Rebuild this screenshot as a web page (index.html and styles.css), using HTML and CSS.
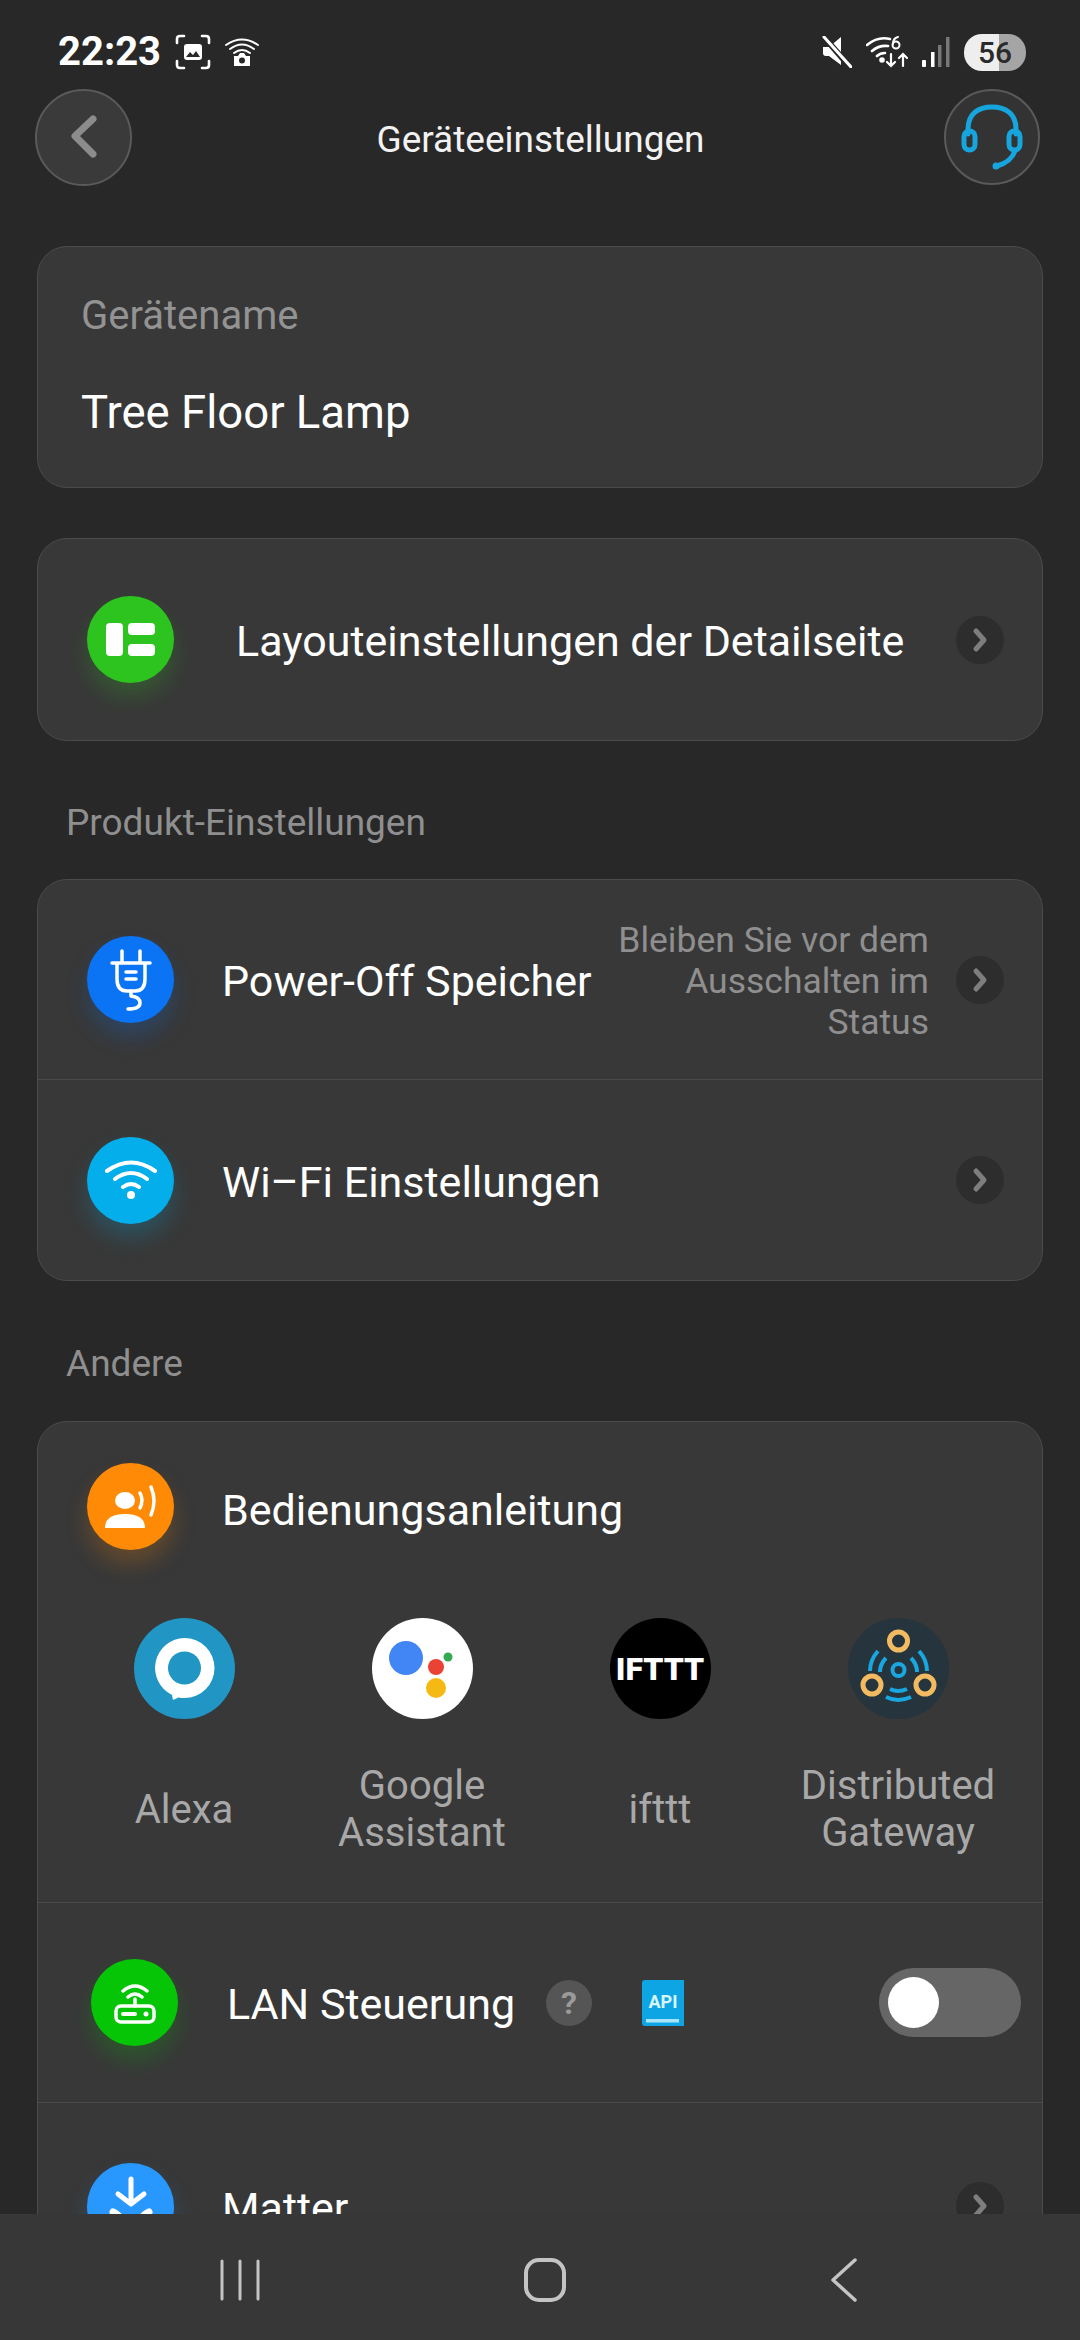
FILE: index.html
```html
<!DOCTYPE html>
<html lang="de">
<head>
    <meta charset="UTF-8">
    <meta name="viewport" content="width=device-width, initial-scale=1.0">
    <title>Geräteeinstellungen</title>
    <link rel="stylesheet" href="styles.css">
</head>
<body>
<div class="screen">
    <div class="content">
        <div class="statusbar">
            <div class="status-left">
                <span class="time">22:23</span>
                <svg width="36" height="36" viewBox="0 0 36 36" fill="none" stroke="#fff" stroke-width="2.6" stroke-linecap="round">
                    <path d="M2 9V5q0-3 3-3h4M27 2h4q3 0 3 3v4M34 27v4q0 3-3 3h-4M9 34H5q-3 0-3-3v-4"/>
                    <rect x="9" y="10" width="18" height="16" rx="3" fill="#fff" stroke="none"/>
                    <path d="M11 23l4-5 3 3 3-4 4 6z" fill="#282828" stroke="none"/>
                </svg>
                <svg width="34" height="30" viewBox="0 0 34 30" fill="none" stroke="#fff" stroke-width="2" stroke-linecap="round">
                    <path d="M1 8Q17-3 33 8M5 12Q17 3 29 12M9 16Q17 10 25 16"/>
                    <path d="M9 29V19h4l2-3h4l2 3h4v10z" fill="#fff" stroke="none"/>
                    <circle cx="17" cy="23.500" r="3" fill="#282828" stroke="none"/>
                </svg>
            </div>
            <div class="status-right">
                <svg width="30" height="32" viewBox="0 0 30 32">
                    <path d="M1 11h6L19 1v28L7 20H4q-3 0-3-3z" fill="#fff"/>
                    <path d="M2 1l26 30" stroke="#282828" stroke-width="6"/>
                    <path d="M2 1l27 30" stroke="#fff" stroke-width="3" stroke-linecap="round"/>
                </svg>
                <svg width="42" height="32" viewBox="0 0 42 32" fill="none" stroke="#fff" stroke-width="2.600" stroke-linecap="round">
                    <path d="M1 9Q12 0 24 3M6 15Q13 9 22 10M11 20Q14 17 19 17"/>
                    <circle cx="16" cy="24" r="1.500" fill="#fff"/>
                    <circle cx="30" cy="9" r="3.500" stroke-width="2"/>
                    <path d="M27 8Q27 2 32 1" stroke-width="2"/>
                    <path d="M25 18v12M21 26l4 4 4-4M37 30V18M33 22l4-4 4 4" stroke-width="2.200"/>
                </svg>
                <svg width="28" height="30" viewBox="0 0 28 30">
                    <rect x="0" y="23" width="4" height="7" rx="1" fill="#fff"/>
                    <rect x="9" y="15" width="3.500" height="15" fill="#fff"/>
                    <rect x="16" y="8" width="3.500" height="22" fill="#777"/>
                    <rect x="24" y="0" width="3.500" height="30" fill="#777"/>
                </svg>
                <div class="battery">56</div>
            </div>
        </div>

        <header class="topbar">
            <div class="round-btn back-btn">
                <svg width="30" height="44" viewBox="0 0 30 44" fill="none" stroke="#8c8c8c" stroke-width="7" stroke-linecap="round" stroke-linejoin="round">
                    <path d="M24 4L6 21l18 18"/>
                </svg>
            </div>
            <h1 class="title">Geräteeinstellungen</h1>
            <div class="round-btn help-btn">
                <svg width="62" height="66" viewBox="0 0 62 66" fill="none" stroke="#16a5dc" stroke-width="5" stroke-linecap="round">
                    <path d="M7 30V25C7 10 17 3 31 3s24 7 24 22v5"/>
                    <rect x="3" y="27" width="11" height="19" rx="5.500"/>
                    <rect x="48" y="27" width="11" height="19" rx="5.500"/>
                    <path d="M54 47Q50 58 36 62"/>
                    <circle cx="35" cy="62" r="3.500" fill="#16a5dc" stroke="none"/>
                </svg>
            </div>
        </header>

        <section class="card name-card">
            <div class="name-label">Gerätename</div>
            <div class="name-value">Tree Floor Lamp</div>
        </section>

        <section class="card layout-card">
            <div class="row row-layout">
                <div class="icon icon-green">
                    <svg width="49" height="33" viewBox="0 0 49 33" fill="#fff">
                        <rect x="0" y="0" width="17" height="33" rx="4"/>
                        <rect x="22" y="0" width="27" height="12" rx="4"/>
                        <rect x="22" y="21" width="27" height="12" rx="4"/>
                    </svg>
                </div>
                <div class="row-text layout-text">Layouteinstellungen der Detailseite</div>
                <div class="chevron"><svg width="16" height="26" viewBox="0 0 16 26"><path d="M4 4l8 9-8 9" fill="none" stroke="#7e7e7e" stroke-width="5" stroke-linecap="round" stroke-linejoin="round"/></svg></div>
            </div>
        </section>

        <h2 class="section-title">Produkt-Einstellungen</h2>
        <section class="card">
            <div class="row">
                <div class="icon icon-blue">
                    <svg width="42" height="62" viewBox="0 0 42 62" fill="none" stroke="#fff" stroke-width="3.500" stroke-linecap="round" stroke-linejoin="round">
                        <path d="M12 2v12M30 2v12M2 14h38M7 14v16q0 12 10 12h8q10 0 10-12V14"/>
                        <path d="M16 23h10M16 30h10"/>
                        <path d="M21 42v5q9 1 9 7t-12 6"/>
                    </svg>
                </div>
                <div class="row-text">Power-Off Speicher</div>
                <div class="row-desc">Bleiben Sie vor dem Ausschalten im Status</div>
                <div class="chevron"><svg width="16" height="26" viewBox="0 0 16 26"><path d="M4 4l8 9-8 9" fill="none" stroke="#7e7e7e" stroke-width="5" stroke-linecap="round" stroke-linejoin="round"/></svg></div>
            </div>
            <div class="row">
                <div class="icon icon-cyan">
                    <svg width="52" height="40" viewBox="0 0 52 40" fill="none" stroke="#fff" stroke-width="4" stroke-linecap="round">
                        <path d="M2 11Q26-6 50 11M10 19Q26 7 42 19M18 27Q26 21 34 27"/>
                        <circle cx="26" cy="35" r="4" fill="#fff" stroke="none"/>
                    </svg>
                </div>
                <div class="row-text">Wi&#8211;Fi Einstellungen</div>
                <div class="chevron"><svg width="16" height="26" viewBox="0 0 16 26"><path d="M4 4l8 9-8 9" fill="none" stroke="#7e7e7e" stroke-width="5" stroke-linecap="round" stroke-linejoin="round"/></svg></div>
            </div>
        </section>

        <h2 class="section-title section-other">Andere</h2>
        <section class="card">
            <div class="row row-manual">
                <div class="icon icon-orange">
                    <svg width="54" height="44" viewBox="0 0 54 44" fill="#fff">
                        <ellipse cx="21" cy="15.500" rx="10" ry="8.500"/>
                        <path d="M1 43q0-14 20-14t20 14z"/>
                        <path d="M36 8q4 7 0 15" fill="none" stroke="#fff" stroke-width="3.500" stroke-linecap="round"/>
                        <path d="M47 2q6 14 0 28" fill="none" stroke="#fff" stroke-width="3.500" stroke-linecap="round"/>
                    </svg>
                </div>
                <div class="row-text">Bedienungsanleitung</div>
            </div>
            <div class="integrations">
                <div class="integration">
                    <svg class="logo" viewBox="0 0 101 101">
                        <circle cx="50.500" cy="50.500" r="50.500" fill="#2196c4"/>
                        <path d="M50.500 20a30 30 0 1 1 0 60 30 30 0 0 1-6-.6L39 82l-1-5a30 30 0 0 1 12.500-57z" fill="#fff"/>
                        <circle cx="50.500" cy="50" r="16.500" fill="#2196c4"/>
                    </svg>
                    <div class="integration-name">Alexa</div>
                </div>
                <div class="integration">
                    <svg class="logo" viewBox="0 0 101 101">
                        <circle cx="50.500" cy="50.500" r="50.500" fill="#fff"/>
                        <circle cx="34" cy="40" r="17" fill="#4285f4"/>
                        <circle cx="64" cy="49" r="8" fill="#ea4335"/>
                        <circle cx="76" cy="39" r="4.500" fill="#34a853"/>
                        <circle cx="64" cy="70" r="10" fill="#f5b914"/>
                    </svg>
                    <div class="integration-name">Google Assistant</div>
                </div>
                <div class="integration">
                    <div class="logo logo-ifttt">IFTTT</div>
                    <div class="integration-name">ifttt</div>
                </div>
                <div class="integration">
                    <svg class="logo" viewBox="0 0 101 101" fill="none">
                        <circle cx="50.500" cy="50.500" r="50.500" fill="#26343d"/>
                        <path d="M30 33Q22 42 22 53M71 33Q79 42 79 53M38 79Q50 85 63 79" stroke="#18a7e0" stroke-width="4"/>
                        <path d="M38 40Q32 46 32 54M63 40Q69 46 69 54M42 71Q50 75 59 71" stroke="#18a7e0" stroke-width="4"/>
                        <circle cx="50.500" cy="52" r="6" stroke="#18a7e0" stroke-width="4"/>
                        <circle cx="50.500" cy="23" r="9" stroke="#f2bb62" stroke-width="5"/>
                        <circle cx="24" cy="67" r="9" stroke="#f2bb62" stroke-width="5"/>
                        <circle cx="77" cy="67" r="9" stroke="#f2bb62" stroke-width="5"/>
                    </svg>
                    <div class="integration-name">Distributed Gateway</div>
                </div>
            </div>
            <div class="row row-lan">
                <div class="icon icon-lime">
                    <svg width="44" height="42" viewBox="0 0 44 42" fill="none" stroke="#fff" stroke-width="3.500" stroke-linecap="round">
                        <path d="M10 9Q22-1 34 9M15 15Q22 9 29 15"/>
                        <path d="M22 17v7"/>
                        <rect x="3" y="24" width="38" height="16" rx="5"/>
                        <path d="M10 32h12" stroke-width="4"/>
                        <circle cx="33" cy="32" r="2.500" fill="#fff" stroke="none"/>
                    </svg>
                </div>
                <div class="row-text lan-text">LAN Steuerung</div>
                <div class="help-dot">?</div>
                <svg class="api-book" width="42" height="46" viewBox="0 0 42 46">
                    <path d="M3 0h39v46H3q-3 0-3-3V3q0-3 3-3z" fill="#0ea5e4"/>
                    <path d="M4 39h33v3.500H4z" fill="#a8e4fb"/>
                    <text x="21" y="28" class="api-label">API</text>
                </svg>
                <div class="switch"><div class="switch-knob"></div></div>
            </div>
            <div class="row row-matter">
                <div class="icon icon-sky">
                    <svg width="46" height="60" viewBox="0 0 46 60" fill="none" stroke="#fff" stroke-width="5" stroke-linecap="round" stroke-linejoin="round">
                        <path d="M23 3v24M10 18l13 10 13-10"/>
                        <path d="M5 36q12 6 12 20M41 36q-12 6-12 20" stroke-width="7"/>
                    </svg>
                </div>
                <div class="row-text">Matter</div>
                <div class="chevron"><svg width="16" height="26" viewBox="0 0 16 26"><path d="M4 4l8 9-8 9" fill="none" stroke="#7e7e7e" stroke-width="5" stroke-linecap="round" stroke-linejoin="round"/></svg></div>
            </div>
        </section>
    </div>

    <nav class="navbar">
        <svg width="40" height="42" viewBox="0 0 40 42" fill="none" stroke="#c4c4c4" stroke-width="3" stroke-linecap="round"><path d="M2 2v38M20 2v38M38 2v38"/></svg>
        <svg width="42" height="44" viewBox="0 0 42 44" fill="none" stroke="#c4c4c4" stroke-width="4"><rect x="2" y="2" width="38" height="40" rx="13"/></svg>
        <svg width="30" height="44" viewBox="0 0 30 44" fill="none" stroke="#c4c4c4" stroke-width="3.500" stroke-linecap="round" stroke-linejoin="round"><path d="M26 2L4 22l22 20"/></svg>
    </nav>
</div>
</body>
</html>
```

FILE: styles.css
```css
* { box-sizing: border-box; }
html, body { margin: 0; padding: 0; }
body {
    width: 1080px;
    height: 2340px;
    overflow: hidden;
    background: #282828;
    color: #fff;
    font-family: Roboto, "Noto Sans", sans-serif;
}
.screen {
    display: flex;
    flex-direction: column;
    height: 2340px;
}
.content {
    height: 2214px;
    overflow: hidden;
    padding: 0 37px;
}

/* status bar */
.statusbar {
    display: flex;
    justify-content: space-between;
    align-items: center;
    height: 52px;
    margin: 26px 17px 0 21px;
}
.status-left, .status-right {
    display: flex;
    align-items: center;
}
.status-left { gap: 14px; }
.status-right { gap: 14px; }
.time {
    font-size: 40px;
    font-weight: 700;
    line-height: 52px;
}
.battery {
    width: 62px;
    height: 37px;
    border-radius: 18px;
    background: linear-gradient(90deg, #eee 56%, #a5a5a5 56%);
    color: #2a2a2a;
    font-size: 30px;
    font-weight: 500;
    line-height: 37px;
    text-align: center;
}

/* header */
.topbar {
    display: flex;
    align-items: center;
    justify-content: space-between;
    height: 98px;
    margin: 10px 3px 0 -2px;
}
.round-btn {
    display: flex;
    align-items: center;
    justify-content: center;
    width: 96px;
    height: 96px;
    border-radius: 50%;
    background: #3a3a3a;
    border: 2px solid #5a5a5a;
}
.back-btn { width: 97px; height: 97px; }
.help-btn { background: #333; }
.title {
    margin: 4px 0 0 5px;
    font-size: 37px;
    font-weight: 400;
    color: #f2f2f2;
}

/* cards */
.card {
    background: #383838;
    border: 1.500px solid #4b4b4b;
    border-radius: 30px;
}
.name-card {
    height: 242px;
    margin-top: 60px;
    padding: 46px 43px 0;
}
.name-label {
    font-size: 40px;
    line-height: 46px;
    color: #939393;
}
.name-value {
    margin-top: 48px;
    font-size: 45.500px;
    line-height: 52px;
}
.layout-card { margin-top: 50px; }

.row {
    display: flex;
    align-items: center;
    height: 200px;
    padding: 0 38px 0 49px;
    border-bottom: 1.500px solid #4b4b4b;
}
.row:last-child { border-bottom: none; }
.row-layout {
    height: 201px;
    border-bottom: none;
}
.row-manual {
    height: 172px;
    border-bottom: none;
}
.row-manual .icon { margin-top: -3px; }
.row-lan {
    height: 201px;
    padding-left: 53px;
    padding-right: 21px;
    border-top: 1.500px solid #4b4b4b;
}
.row-matter {
    padding-top: 6px;
}

.icon {
    display: flex;
    align-items: center;
    justify-content: center;
    flex: none;
    width: 87px;
    height: 87px;
    border-radius: 50%;
}
.icon-green { background: #2dc41f; box-shadow: 0 14px 22px rgba(45, 196, 31, .22); }
.icon-blue { background: #0a74f5; box-shadow: 0 14px 22px rgba(10, 116, 245, .22); }
.icon-cyan { background: #04aeea; box-shadow: 0 14px 22px rgba(4, 174, 234, .22); }
.icon-orange { background: #ff8a05; box-shadow: 0 14px 22px rgba(255, 138, 5, .22); }
.icon-lime { background: #06c406; box-shadow: 0 14px 22px rgba(6, 196, 6, .22); }
.icon-sky { background: #2898ff; box-shadow: 0 14px 22px rgba(40, 152, 255, .22); }

.row-text {
    margin-left: 48px;
    padding-top: 3px;
    font-size: 43px;
    white-space: nowrap;
}
.layout-text { margin-left: 62px; }
.row-desc {
    width: 320px;
    margin-left: auto;
    margin-right: 27px;
    padding-top: 3px;
    font-size: 35.500px;
    line-height: 41px;
    text-align: right;
    color: #8f8f8f;
}
.chevron {
    display: flex;
    align-items: center;
    justify-content: center;
    width: 48px;
    height: 48px;
    margin-left: auto;
    border-radius: 50%;
    background: #2d2d2d;
}
.row-desc + .chevron { margin-left: 0; }

.section-title {
    height: 138px;
    margin: 0 0 0 29px;
    padding-top: 57px;
    font-size: 37px;
    font-weight: 400;
    line-height: 50px;
    color: #8f8f8f;
}
.section-other {
    height: 140px;
    padding-top: 58px;
}

/* integrations */
.integrations {
    display: grid;
    grid-template-columns: repeat(4, 238px);
    height: 308px;
    padding: 24px 0 0 27px;
}
.integration {
    display: flex;
    flex-direction: column;
    align-items: center;
}
.logo {
    width: 101px;
    height: 101px;
    flex: none;
}
.logo-ifttt {
    display: flex;
    align-items: center;
    justify-content: center;
    border-radius: 50%;
    background: #000;
    font-size: 32px;
    font-weight: 900;
}
.integration-name {
    display: flex;
    align-items: center;
    height: 94px;
    margin-top: 43px;
    font-size: 40px;
    line-height: 47px;
    text-align: center;
    color: #a8a8a8;
}

/* LAN row */
.lan-text { margin-left: 49px; }
.help-dot {
    flex: none;
    width: 46px;
    height: 46px;
    margin-left: 31px;
    border-radius: 50%;
    background: #555;
    color: #9a9a9a;
    font-size: 32px;
    font-weight: 700;
    line-height: 46px;
    text-align: center;
}
.api-book {
    flex: none;
    margin-left: 50px;
}
.api-label {
    font-size: 18px;
    font-weight: 700;
    fill: #d6f5ff;
    text-anchor: middle;
}
.switch {
    position: relative;
    width: 142px;
    height: 69px;
    margin-left: auto;
    border-radius: 35px;
    background: #666;
}
.switch-knob {
    position: absolute;
    left: 9px;
    top: 9px;
    width: 51px;
    height: 51px;
    border-radius: 50%;
    background: #fff;
}

/* bottom navigation */
.navbar {
    display: flex;
    align-items: center;
    justify-content: space-between;
    height: 126px;
    padding: 5px 221px 0 220px;
    background: #373737;
}
```
